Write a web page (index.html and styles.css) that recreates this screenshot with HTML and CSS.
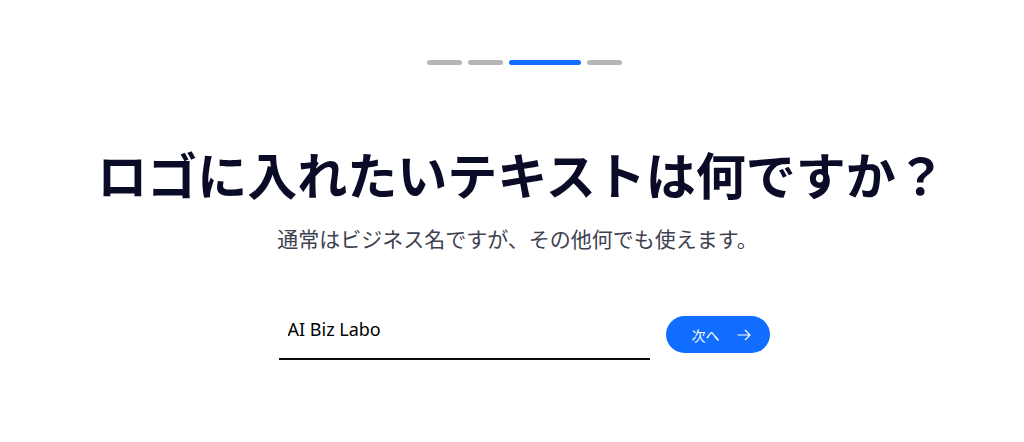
FILE: index.html
```html
<!DOCTYPE html>
<html lang="ja">
<head>
<meta charset="utf-8">
<link rel="stylesheet" href="styles.css">
</head>
<body>
<div class="page">
  <div class="progress">
    <span class="step"></span>
    <span class="step"></span>
    <span class="step active"></span>
    <span class="step"></span>
  </div>
  <h1 class="title">ロゴに入れたいテキストは何ですか？</h1>
  <p class="subtitle">通常はビジネス名ですが、その他何でも使えます。</p>
  <div class="form">
    <div class="field">
      <input class="input" type="text" value="AI Biz Labo">
    </div>
    <button class="next" type="button">
      <span class="next-label">次へ</span>
      <svg class="arrow" width="14" height="12" viewBox="0 0 14 12" fill="none" stroke="#fff" stroke-width="1.2">
        <path d="M0.5 6H13M8 1l5 5-5 5"/>
      </svg>
    </button>
  </div>
</div>
</body>
</html>
```
FILE: styles.css
```css
* { box-sizing: border-box; }
html, body { margin: 0; padding: 0; background: #fff; }
body { font-family: "Noto Sans CJK JP", "Noto Sans", sans-serif; }
.page {
  width: 1024px;
  height: 442px;
  display: flex;
  flex-direction: column;
  align-items: center;
}
.progress {
  display: flex;
  gap: 6px;
  margin-top: 60px;
  margin-left: 24px;
}
.step {
  display: block;
  width: 35px;
  height: 5px;
  border-radius: 3px;
  background: #b5b5b5;
}
.step.active {
  width: 72px;
  background: #116dff;
}
.title {
  margin: 78px 0 0 19px;
  font-size: 50px;
  font-weight: 700;
  line-height: 60px;
  color: #0a0c27;
  letter-spacing: 0;
}
.subtitle {
  margin: 21px 0 0 11px;
  font-size: 21px;
  line-height: 28px;
  color: #3e414f;
  font-weight: 400;
}
.form {
  display: flex;
  align-items: flex-start;
  gap: 16px;
  margin-top: 64px;
  margin-left: 24px;
}
.field {
  width: 371px;
  border-bottom: 2px solid #0a0a0a;
  padding: 0 0 0 9px;
  height: 44px;
  display: flex;
  align-items: center;
}
.input {
  border: 0;
  outline: none;
  background: transparent;
  font-family: "Noto Sans", "Noto Sans CJK JP", sans-serif;
  font-size: 18px;
  font-weight: 400;
  color: #000;
  width: 100%;
  padding: 0;
  margin-top: -16px;
}
.next {
  width: 104px;
  height: 37px;
  border: 0;
  border-radius: 19px;
  background: #116dff;
  color: #fff;
  display: flex;
  align-items: center;
  justify-content: center;
  gap: 17px;
  padding: 0 0 0 7px;
  font-family: "Noto Sans CJK JP", sans-serif;
  font-size: 14px;
}
.next-label { line-height: 1; }
.arrow { display: block; }
```
